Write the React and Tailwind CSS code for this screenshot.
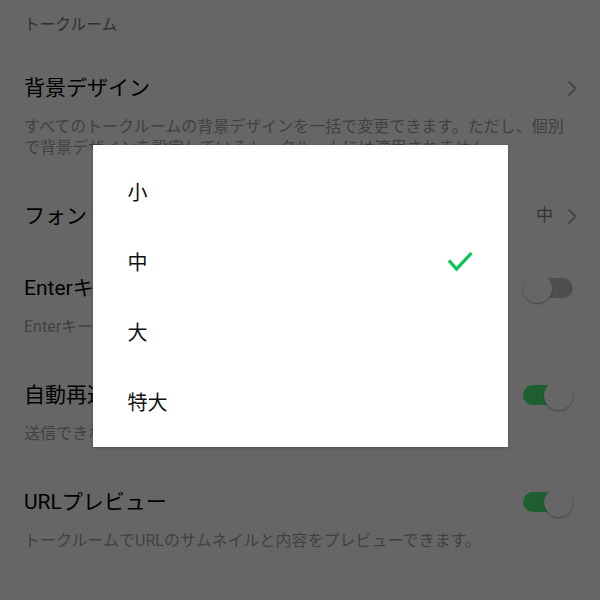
import React from 'react';

const font = { fontFamily: 'Roboto, "Noto Sans CJK JP", sans-serif' };

const Chevron = () => (
  <svg width="10" height="17" viewBox="0 0 10 17" className="shrink-0 mr-[-1px]">
    <polyline points="1.5,1.5 8.5,8.5 1.5,15.5" fill="none" stroke="#9a9a9a" strokeWidth="1.6" />
  </svg>
);

const Toggle = ({ on }) => (
  <div className="relative w-[50px] h-[29px] mr-[3px] shrink-0">
    <div
      className={`absolute left-0 right-0 top-[4.5px] h-[20px] rounded-full ${
        on ? 'bg-[#4dee7a]' : 'bg-[#c4c4c4]'
      }`}
    />
    <div
      className={`absolute top-0 w-[29px] h-[29px] rounded-full bg-white shadow-[0_1px_2px_rgba(0,0,0,0.35)] ${
        on ? 'right-0' : 'left-0'
      }`}
    />
  </div>
);

const Row = ({ title, desc, right, className = 'pt-[22px]' }) => (
  <div className={`px-6 pb-[22px] ${className}`}>
    <div className="flex items-center justify-between h-[28px]">
      <span className="text-[21px] leading-[28px] text-black">{title}</span>
      {right}
    </div>
    {desc && <p className="mt-[14px] text-[16px] leading-[21px] text-[#a3a3a3]">{desc}</p>}
  </div>
);

const sizes = ['小', '中', '大', '特大'];

export default function App() {
  const selected = '中';

  return (
    <div className="relative w-[600px] h-[600px] overflow-hidden bg-white" style={font}>
      <div className="flex flex-col">
        <div className="px-6 pt-[14px] pb-[16px] text-[15.7px] leading-[22px] text-[#777]">トークルーム</div>
        <Row
          title="背景デザイン"
          desc="すべてのトークルームの背景デザインを一括で変更できます。ただし、個別で背景デザインを設定しているトークルームには適用されません。"
          right={<Chevron />}
        />
        <Row
          title="フォントサイズ"
          right={
            <div className="flex items-center gap-[14px]">
              <span className="text-[17px] text-[#808080]">中</span>
              <Chevron />
            </div>
          }
        />
        <Row title="Enterキーで送信" desc="Enterキーを押すとメッセージが送信されます。" right={<Toggle on={false} />} />
        <Row title="自動再送信" desc="送信できなかったメッセージを自動で再送信します。" right={<Toggle on />} />
        <Row title="URLプレビュー" desc="トークルームでURLのサムネイルと内容をプレビューできます。" right={<Toggle on />} />
        <Row title="メッセージの自動再生" right={<Toggle on />} className="pt-[25px]" />
      </div>

      <div className="absolute inset-0 bg-black/60 flex items-center justify-center pb-[8px]">
        <div className="w-[415px] bg-white py-[11px] shadow-[0_1px_3px_rgba(0,0,0,0.2)]">
          {sizes.map((s) => (
            <div key={s} className="h-[70px] flex items-center justify-between pl-[35px] pr-[35px]">
              <span className="text-[20px] leading-[24px] pt-[3px] text-[#111]">{s}</span>
              {s === selected && (
                <svg width="26" height="21" viewBox="0 0 26 21">
                  <polyline
                    points="2,9.5 9.5,18 24.5,2"
                    fill="none"
                    stroke="#06c755"
                    strokeWidth="3.2"
                  />
                </svg>
              )}
            </div>
          ))}
        </div>
      </div>
    </div>
  );
}
